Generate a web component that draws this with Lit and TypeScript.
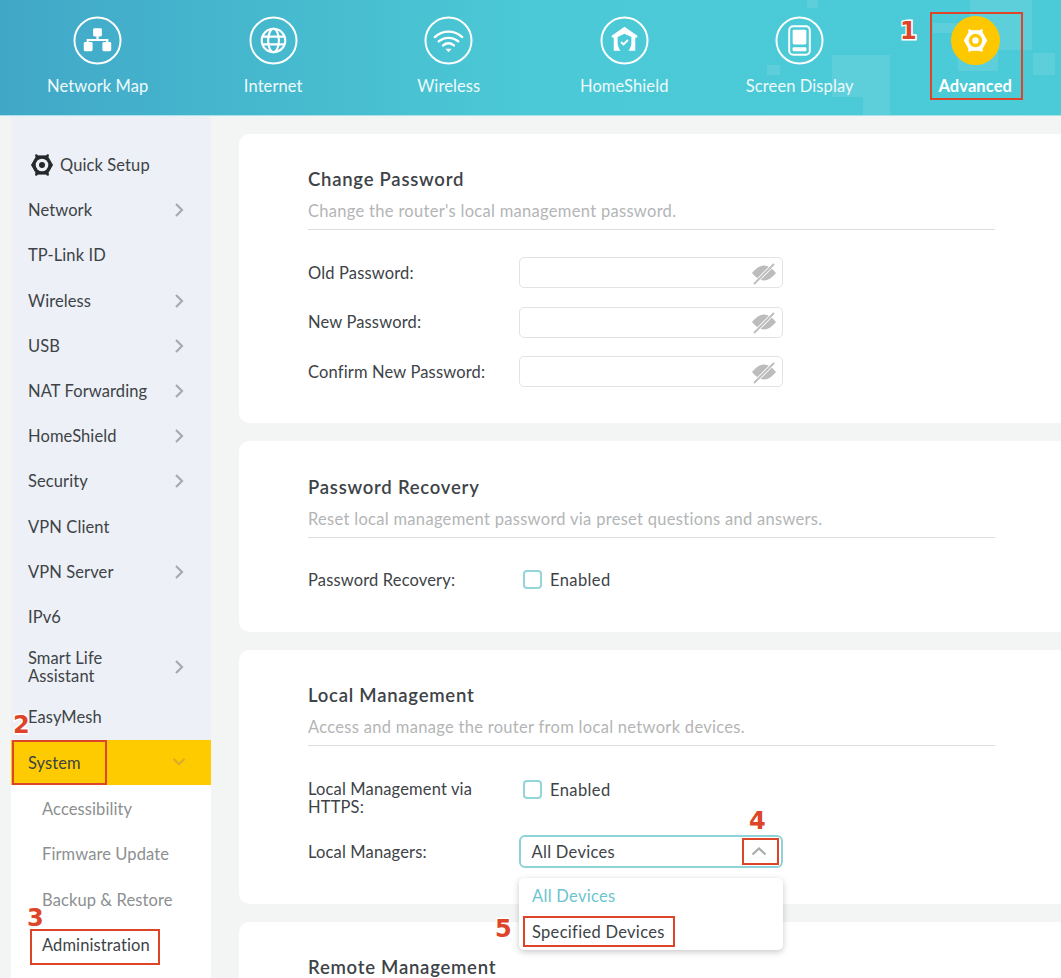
import { LitElement, html, css, svg } from 'lit';
import { customElement } from 'lit/decorators.js';

const gear = (fg: string, hole: string) => svg`
  <path fill="${fg}" stroke="${fg}" stroke-width="1" stroke-linejoin="round" d="M22.500 12l-5.250 9.100H6.750L1.500 12l5.250-9.100h10.500z"/>
  <g fill="${fg}">
    <circle cx="6.300" cy="2.600" r="1.300"/><circle cx="17.700" cy="2.600" r="1.300"/>
    <circle cx="6.300" cy="21.400" r="1.300"/><circle cx="17.700" cy="21.400" r="1.300"/>
  </g>
  <circle cx="12" cy="12" r="6.300" fill="${hole}"/>
  <circle cx="12" cy="12" r="3" fill="${fg}"/>`;

const navItems = [
  {
    label: 'Network Map',
    icon: svg`<g fill="#fff"><rect x="20.500" y="12.500" width="9" height="8.500" rx="1.500"/><rect x="11" y="26.500" width="9" height="9.500" rx="1.500"/><rect x="30" y="26.500" width="9" height="9.500" rx="1.500"/></g>
      <path d="M25 20v5M15 27v-2.500h20V27" fill="none" stroke="#fff" stroke-width="2.200"/>`,
  },
  {
    label: 'Internet',
    icon: svg`<g fill="none" stroke="#fff" stroke-width="2.200"><circle cx="25" cy="25" r="12"/><ellipse cx="25" cy="25" rx="5.500" ry="12"/><path d="M13.500 21h23M13.500 29h23"/></g>`,
  },
  {
    label: 'Wireless',
    icon: svg`<g fill="none" stroke="#fff" stroke-width="2.400" stroke-linecap="round"><path d="M11 21.500c8-7.500 20-7.500 28 0"/><path d="M15 26c5.800-5 14.200-5 20 0"/><path d="M19.500 30c3.300-2.600 7.700-2.600 11 0"/></g><path d="M21.800 33.500h6.400L25 37z" fill="#fff"/>`,
  },
  {
    label: 'HomeShield',
    icon: svg`<path fill="#fff" d="M25 11l13.500 9.500-1.500 2-1-.6V35.500h-7c2-2.500 3-5.500 3-8.500v-5.500L25 18l-7 3.500V27c0 3 1 6 3 8.500h-7V21.900l-1 .6-1.500-2z"/>
      <path d="M21.500 26.500l2.500 2.500 4.500-4.500" fill="none" stroke="#fff" stroke-width="2"/>`,
  },
  {
    label: 'Screen Display',
    icon: svg`<rect x="14.500" y="10.500" width="21" height="29" rx="4" fill="none" stroke="#fff" stroke-width="2"/><rect x="18" y="14" width="14" height="15" rx="1.500" fill="#fff"/><rect x="18" y="32" width="14" height="4" rx="1" fill="#fff"/>`,
  },
];

const sideItems = [
  { label: 'Network', arrow: true },
  { label: 'TP-Link ID' },
  { label: 'Wireless', arrow: true },
  { label: 'USB', arrow: true },
  { label: 'NAT Forwarding', arrow: true },
  { label: 'HomeShield', arrow: true },
  { label: 'Security', arrow: true },
  { label: 'VPN Client' },
  { label: 'VPN Server', arrow: true },
  { label: 'IPv6' },
  { label: 'Smart Life Assistant', arrow: true, tall: true },
  { label: 'EasyMesh' },
];

const marks = [
  { n: '1', cls: 'n1' },
  { n: '2', cls: 'n2' },
  { n: '3', cls: 'n3' },
  { n: '4', cls: 'n4' },
  { n: '5', cls: 'n5' },
];

@customElement('app-root')
export class AppRoot extends LitElement {
  static styles = css`
    :host {
      display: block;
      position: relative;
      height: 978px;
      overflow: hidden;
      background: #f3f4f4;
      font-family: Lato, 'Open Sans', sans-serif;
      font-size: 16.500px;
      letter-spacing: 0.1px;
      color: #3d4347;
    }
    .top {
      position: relative;
      height: 115px;
      padding-left: 10px;
      display: grid;
      grid-template-columns: repeat(6, 175.500px);
      overflow: hidden;
      background: linear-gradient(90deg, #41a7c8 0%, #47bccf 30%, #4bc9d6 50%, #4bcad7 100%);
      border-bottom: 1px solid #a9e2e8;
    }
    .blob {
      position: absolute;
      background: rgba(255, 255, 255, 0.1);
    }
    .s1 { left: 807px; top: 0; width: 11px; height: 8px; }
    .s2 { left: 832px; top: 55px; width: 58px; height: 42px; }
    .s3 { left: 863px; top: 97px; width: 27px; height: 18px; }
    .s4 { left: 767px; top: 65px; width: 13px; height: 10px; }
    .s5 { left: 970px; top: 0; width: 62px; height: 50px; }
    .s6 { left: 933px; top: 23px; width: 37px; height: 10px; }
    .s7 { left: 1033px; top: 53px; width: 22px; height: 22px; }
    .s8 { left: 958px; top: 50px; width: 40px; height: 21px; }
    .nav {
      position: relative;
      display: flex;
      flex-direction: column;
      align-items: center;
      padding-top: 16px;
      color: #eefafb;
    }
    .ring {
      width: 49px;
      height: 49px;
      display: block;
    }
    .nav span {
      margin-top: 11px;
      line-height: 21px;
    }
    .nav.on span {
      font-weight: 700;
      color: #fff;
    }
    .body {
      display: flex;
      align-items: flex-start;
    }
    .side {
      width: 200px;
      height: 862px;
      margin-left: 11px;
      flex: none;
      background: #fff;
    }
    .side-top {
      padding: 26.500px 0 0.500px;
      background: #edf0f6;
    }
    .row {
      height: 45.200px;
      padding: 0 26px 0 17px;
      display: flex;
      align-items: center;
      justify-content: space-between;
      line-height: 18px;
    }
    .row.tall {
      height: 55px;
    }
    .row.tall span {
      width: 110px;
    }
    .row.quick {
      justify-content: flex-start;
      gap: 6px;
      padding-left: 19px;
    }
    .row.quick svg {
      width: 24px;
      height: 24px;
    }
    .row.sys {
      background: #fecb00;
    }
    .sub {
      height: 45.300px;
      padding-left: 31px;
      display: flex;
      align-items: center;
      color: #8c8f91;
    }
    .sub.cur {
      color: #3d4347;
    }
    .subs {
      padding-top: 1px;
    }
    .main {
      flex: 1;
      padding: 18px 0 0 28px;
      display: flex;
      flex-direction: column;
      gap: 18px;
    }
    .card {
      background: #fff;
      border-radius: 10px 0 0 10px;
      padding: 32px 66px 36px 69px;
    }
    .card.c2 {
      padding-top: 33px;
      padding-bottom: 37px;
    }
    h2 {
      margin: 2px 0 9px;
      font-size: 18.500px;
      line-height: 22px;
      font-weight: 600;
      letter-spacing: 0.75px;
      color: #3d4347;
    }
    .hint {
      padding-bottom: 6px;
      line-height: 24px;
      letter-spacing: 0.3px;
      color: #b3b5b6;
      border-bottom: 1px solid #dcdddd;
    }
    .form {
      padding-top: 27px;
      display: flex;
      flex-direction: column;
      gap: 18.500px;
    }
    .c2 .form {
      padding-top: 26px;
    }
    .c3 .form {
      padding-top: 34px;
      gap: 19px;
    }
    .field {
      display: flex;
      align-items: center;
      min-height: 31px;
      line-height: 18px;
      letter-spacing: 0.15px;
    }
    .field.start {
      align-items: flex-start;
    }
    .field label {
      width: 211px;
      flex: none;
    }
    .field.start label {
      width: 190px;
      margin-right: 21px;
    }
    .input {
      width: 264px;
      height: 31px;
      box-sizing: border-box;
      border: 1.500px solid #e2e3e3;
      border-radius: 5px;
      display: flex;
      align-items: center;
      justify-content: flex-end;
      padding-right: 5px;
    }
    .input svg {
      width: 26px;
      height: 24px;
    }
    .check {
      margin-left: 4px;
      display: flex;
      align-items: center;
      gap: 8px;
      letter-spacing: 0.4px;
    }
    .box {
      width: 19px;
      height: 19px;
      box-sizing: border-box;
      border: 2px solid #93d5da;
      border-radius: 4px;
    }
    .select {
      position: relative;
      width: 264px;
      height: 33px;
      box-sizing: border-box;
      border: 2px solid #8fd2d8;
      border-radius: 6px;
      padding: 0 14px 0 10.500px;
      display: flex;
      align-items: center;
      justify-content: space-between;
      letter-spacing: 0.3px;
    }
    .menu {
      position: absolute;
      left: -2px;
      top: 41px;
      width: 264px;
      height: 72px;
      box-sizing: border-box;
      padding-left: 13px;
      background: #fff;
      border-radius: 5px;
      box-shadow: 0 2px 6px rgba(0, 0, 0, 0.22);
      display: flex;
      flex-direction: column;
      justify-content: space-around;
      z-index: 1;
    }
    .menu .sel {
      color: #6cc5ce;
    }
    .box-mark {
      position: absolute;
      box-sizing: border-box;
      border: 2px solid #dd4428;
      z-index: 2;
    }
    .b1 { left: 930px; top: 12px; width: 93px; height: 88px; }
    .b2 { left: 12px; top: 740px; width: 95px; height: 45px; }
    .b3 { left: 30px; top: 929px; width: 130px; height: 36px; }
    .b4 { left: 742px; top: 838px; width: 37px; height: 27px; }
    .b5 { left: 523px; top: 916px; width: 152px; height: 31px; }
    .num {
      position: absolute;
      z-index: 3;
      font-family: 'DejaVu Sans', sans-serif;
      font-weight: 700;
      font-size: 24px;
      line-height: 28px;
      color: #dd4428;
      -webkit-text-stroke: 3px #fff;
      paint-order: stroke fill;
    }
    .n1 { left: 900px; top: 17px; }
    .n2 { left: 13px; top: 711px; }
    .n3 { left: 27px; top: 904px; }
    .n4 { left: 749px; top: 807px; }
    .n5 { left: 495px; top: 915px; }
  `;

  private chevron(dir: string, color: string) {
    const w = dir === 'up' ? 16 : 12;
    const d = dir === 'right' ? 'M3 2l6 6-6 6' : dir === 'down' ? 'M.5 4l5.500 5 5.500-5' : 'M1.500 10.500l6.500-6 6.500 6';
    return html`<svg width="${w}" height="16" viewBox="0 0 ${w} 16">
      <path d="${d}" fill="none" stroke="${color}" stroke-width="2.200"/>
    </svg>`;
  }

  private eye() {
    return html`<svg viewBox="0 0 26 24">
      <path fill="#bcbcbc" d="M1 12C4.500 7.500 9 4.500 13 4.500s8.500 3 12 7.500c-3.500 4.500-8 7.500-12 7.500S4.500 16.500 1 12z"/>
      <path d="M3 23L23 3" stroke="#fff" stroke-width="3.400"/>
      <path d="M3 23L23 3" stroke="#bcbcbc" stroke-width="1.800"/>
    </svg>`;
  }

  private pwField(label: string) {
    return html`<div class="field"><label>${label}</label><div class="input">${this.eye()}</div></div>`;
  }

  private check() {
    return html`<div class="check"><div class="box"></div>Enabled</div>`;
  }

  render() {
    return html`
      <div class="top">
        <div class="blob s1"></div>
        <div class="blob s2"></div>
        <div class="blob s3"></div>
        <div class="blob s4"></div>
        <div class="blob s5"></div>
        <div class="blob s6"></div>
        <div class="blob s7"></div>
        <div class="blob s8"></div>
        ${navItems.map(
          (n) => html`<div class="nav">
            <svg class="ring" viewBox="0 0 50 50">
              <circle cx="25" cy="25" r="23.500" fill="none" stroke="#fff" stroke-width="2"/>
              ${n.icon}
            </svg>
            <span>${n.label}</span>
          </div>`
        )}
        <div class="nav on">
          <svg class="ring" viewBox="0 0 50 50">
            <circle cx="25" cy="25" r="25" fill="#fdc800"/>
            <g transform="translate(12 12) scale(1.083)">${gear('#fff', '#fdc800')}</g>
          </svg>
          <span>Advanced</span>
        </div>
      </div>

      <div class="body">
        <div class="side">
          <div class="side-top">
            <div class="row quick">
              <svg viewBox="0 0 24 24">${gear('#24282b', '#edf0f6')}</svg>
              <span>Quick Setup</span>
            </div>
            ${sideItems.map(
              (s) => html`<div class="row ${s.tall ? 'tall' : ''}">
                <span>${s.label}</span>
                ${s.arrow ? this.chevron('right', '#a8abad') : ''}
              </div>`
            )}
          </div>
          <div class="row sys"><span>System</span>${this.chevron('down', '#d9ad2a')}</div>
          <div class="subs">
            <div class="sub">Accessibility</div>
            <div class="sub">Firmware Update</div>
            <div class="sub">Backup &amp; Restore</div>
            <div class="sub cur">Administration</div>
          </div>
        </div>

        <div class="main">
          <section class="card">
            <h2>Change Password</h2>
            <div class="hint">Change the router's local management password.</div>
            <div class="form">
              ${this.pwField('Old Password:')}
              ${this.pwField('New Password:')}
              ${this.pwField('Confirm New Password:')}
            </div>
          </section>
          <section class="card c2">
            <h2>Password Recovery</h2>
            <div class="hint">Reset local management password via preset questions and answers.</div>
            <div class="form">
              <div class="field"><label>Password Recovery:</label>${this.check()}</div>
            </div>
          </section>
          <section class="card c3">
            <h2>Local Management</h2>
            <div class="hint">Access and manage the router from local network devices.</div>
            <div class="form">
              <div class="field start"><label>Local Management via HTTPS:</label>${this.check()}</div>
              <div class="field">
                <label>Local Managers:</label>
                <div class="select">
                  All Devices ${this.chevron('up', '#a8abad')}
                  <div class="menu">
                    <div class="sel">All Devices</div>
                    <div>Specified Devices</div>
                  </div>
                </div>
              </div>
            </div>
          </section>
          <section class="card">
            <h2>Remote Management</h2>
          </section>
        </div>
      </div>

      <div class="box-mark b1"></div>
      <div class="box-mark b2"></div>
      <div class="box-mark b3"></div>
      <div class="box-mark b4"></div>
      <div class="box-mark b5"></div>
      ${marks.map((m) => html`<div class="num ${m.cls}">${m.n}</div>`)}
    `;
  }
}
